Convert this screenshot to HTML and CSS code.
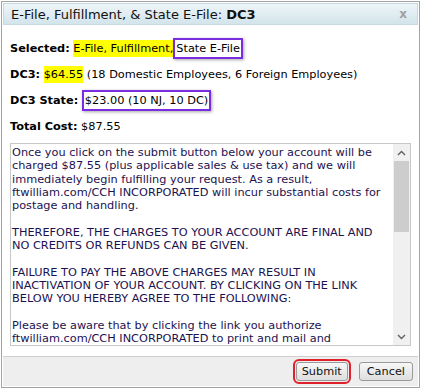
FILE: index.html
```html
<!DOCTYPE html>
<html>
<head>
<meta charset="utf-8">
<link rel="stylesheet" href="styles.css">
</head>
<body>
<div class="dialog">
  <div class="titlebar">
    <span class="title">E-File, Fulfillment, &amp; State E-File: <b>DC3</b></span>
    <span class="close">x</span>
  </div>
  <div class="content">
    <p class="row"><b>Selected:</b> <span class="hl">E-File, Fulfillment,</span><span class="box">State E-File</span></p>
    <p class="row"><b>DC3:</b> <span class="hl">$64.55</span> (18 Domestic Employees, 6 Foreign Employees)</p>
    <p class="row"><b>DC3 State:</b> <span class="box">$23.00 (10 NJ, 10 DC)</span></p>
    <p class="row last"><b>Total Cost:</b> $87.55</p>
    <div class="terms">
      <div class="terms-text">
        <p>Once you click on the submit button below your account will be charged $87.55 (plus applicable sales &amp; use tax) and we will immediately begin fulfilling your request. As a result, ftwilliam.com/CCH INCORPORATED will incur substantial costs for postage and handling.</p>
        <p>THEREFORE, THE CHARGES TO YOUR ACCOUNT ARE FINAL AND NO CREDITS OR REFUNDS CAN BE GIVEN.</p>
        <p>FAILURE TO PAY THE ABOVE CHARGES MAY RESULT IN INACTIVATION OF YOUR ACCOUNT. BY CLICKING ON THE LINK BELOW YOU HEREBY AGREE TO THE FOLLOWING:</p>
        <p>Please be aware that by clicking the link you authorize ftwilliam.com/CCH INCORPORATED to print and mail and electronically file the Form(s) on behalf of the company or plan.</p>
      </div>
      <div class="scrollbar">
        <span class="arrow up"><svg width="9" height="6" viewBox="0 0 9 6"><path d="M1 5 L4.5 1.5 L8 5" fill="none" stroke="#606060" stroke-width="1.4"/></svg></span>
        <span class="thumb"></span>
        <span class="track"></span>
        <span class="arrow down"><svg width="9" height="6" viewBox="0 0 9 6"><path d="M1 1 L4.5 4.5 L8 1" fill="none" stroke="#606060" stroke-width="1.4"/></svg></span>
      </div>
    </div>
  </div>
  <div class="footer">
    <button class="btn submit">Submit</button>
    <button class="btn cancel">Cancel</button>
  </div>
</div>
</body>
</html>
```

FILE: styles.css
```css
html, body {
  margin: 0;
  padding: 0;
  background: #ffffff;
}
body {
  padding: 1px 2px 1px 1px;
  font-family: "DejaVu Sans", Verdana, sans-serif;
  font-size: 11.3px;
  color: #000;
}
.dialog {
  border: 1px solid #a3a3a3;
  padding: 1px;
  height: 387px;
  box-sizing: border-box;
  display: flex;
  flex-direction: column;
  background: #fff;
}
.titlebar {
  height: 22px;
  flex: none;
  box-sizing: border-box;
  border: 1px solid #c6d9e1;
  background: linear-gradient(#eef5f8, #d3e4eb);
  display: flex;
  align-items: center;
  justify-content: space-between;
  padding: 0 10px 0 7px;
}
.title {
  font-size: 13px;
  color: #111;
}
.close {
  font-weight: bold;
  color: #a0a0a0;
  font-size: 12px;
}
.content {
  flex: 1;
  padding: 17px 7px 0 7px;
}
.row {
  margin: 0 0 12px 0;
  line-height: 14px;
}
.row.last {
  margin-bottom: 9px;
}
.hl {
  background: #ffff00;
  padding: 2px 0;
}
.box {
  border: 2px solid #7a2de0;
  padding: 2px 1px;
  box-shadow: 1px 1px 3px rgba(0,0,0,0.35);
}
.terms {
  border: 1px solid #c8c8c8;
  height: 203px;
  box-sizing: border-box;
  display: flex;
  overflow: hidden;
}
.terms-text {
  flex: 1;
  padding: 2px 2px 0 1px;
  color: #1c1250;
  line-height: 13.3px;
}
.terms-text p {
  margin: 0 0 13.3px 0;
}
.scrollbar {
  width: 17px;
  background: #f0f0f0;
  display: flex;
  flex-direction: column;
}
.arrow {
  height: 17px;
  display: flex;
  align-items: center;
  justify-content: center;
}
.thumb {
  height: 71px;
  background: #cdcdcd;
  margin: 0 1px;
}
.track {
  flex: 1;
}
.footer {
  height: 30px;
  flex: none;
  box-sizing: border-box;
  border-top: 1px solid #cfcfcf;
  background: #eeeeee;
  display: flex;
  justify-content: flex-end;
  align-items: center;
  gap: 11px;
  padding: 0 5px 0 0;
}
.btn {
  font-family: "DejaVu Sans", Verdana, sans-serif;
  font-size: 11.3px;
  height: 19px;
  padding: 0 7px;
  border: 1px solid #9a9a9a;
  border-radius: 3px;
  background: linear-gradient(#f7f7f7, #dedede);
  color: #111;
}
.submit {
  padding: 0 5px;
  outline: 2px solid #e0202a;
  outline-offset: 1px;
}
```
